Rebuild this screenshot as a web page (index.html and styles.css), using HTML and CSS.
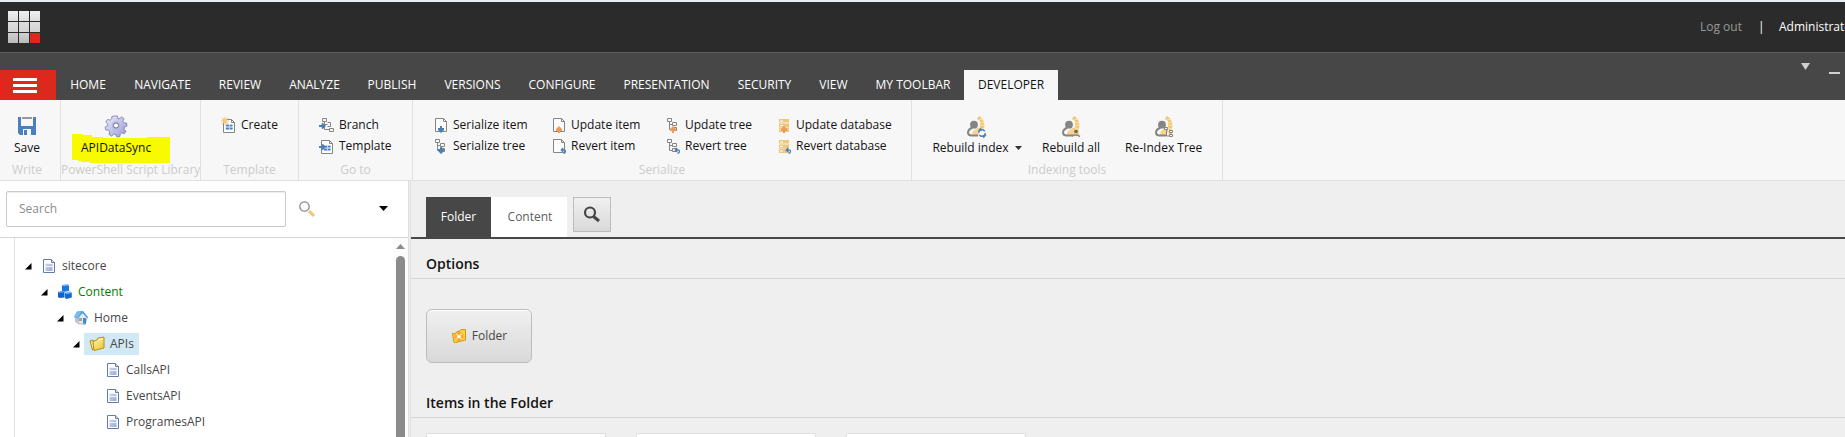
FILE: index.html
```html
<!DOCTYPE html>
<html lang="en">
<head>
<meta charset="utf-8">
<title>Content Editor</title>
<link rel="stylesheet" href="styles.css">
</head>
<body>
<svg class="sprites" width="0" height="0" aria-hidden="true">
  <defs>
    <linearGradient id="gGear" x1="0" y1="0" x2="1" y2="1"><stop offset="0" stop-color="#ececfa"/><stop offset="1" stop-color="#9a9ad0"/></linearGradient>
    <linearGradient id="gFolder" x1="0" y1="0" x2="1" y2="1"><stop offset="0" stop-color="#fff6b0"/><stop offset="1" stop-color="#f0c22c"/></linearGradient>
    <linearGradient id="gDoc" x1="0" y1="0" x2="1" y2="1"><stop offset="0" stop-color="#ccd5ea"/><stop offset="1" stop-color="#9aaad2"/></linearGradient>
    <symbol id="page" viewBox="0 0 14 16"><path d="M1.500 1.500h8l3 3v10h-11z" fill="#fbfbfb" stroke="#858585"/><path d="M9.500 1.500v3h3" fill="none" stroke="#858585"/></symbol>
    <symbol id="tree" viewBox="0 0 14 16"><path d="M1.500 1.500h4v3h-4zM3.500 4.500v8h3M3.500 7.500h3M6.500 5.500h4v3h-4zM6.500 10.500h4v3h-4z" fill="none" stroke="#858585"/></symbol>
    <symbol id="db" viewBox="0 0 14 16"><path d="M2 2h10v3.500H2zM2 6.500h10V10H2zM2 11h10v4H2z" fill="#ecc77d"/><path d="M2 6h10M2 10.500h10" stroke="#f3dcaa"/><path d="M3 4h3M3 8.500h3M3 13h3" stroke="#fff"/></symbol>
    <symbol id="down" viewBox="0 0 14 16"><path d="M6 9h2v2h2v2l-3 3-3-3v-2h2z" fill="#4a7fba"/></symbol>
    <symbol id="up" viewBox="0 0 14 16"><path d="M6 16h2v-2h2v-2L7 9l-3 3v2h2z" fill="#ee9a58"/></symbol>
    <symbol id="undo" viewBox="0 0 14 16"><path d="M9 12h3q1.700 0 1.500 1.500T11.500 15.300M11.200 10l-2 2 2 2" fill="none" stroke="#4a7fba" stroke-width="1.300"/></symbol>
    <symbol id="sheet" viewBox="0 0 14 16"><path d="M2.500 2.500h8l3 3v10h-11z" fill="#fff" stroke="#858585"/><path d="M10.500 2.500v3h3" fill="none" stroke="#858585"/><path d="M4.500 7.500h7v5.500h-7z" fill="#bdd4ee"/><path d="M5 8.500h3M9 8.500h2.500M5 11.500h3M9 11.500h2.500" stroke="#4a7fba" stroke-width="1.600"/></symbol>
    <symbol id="person" viewBox="0 0 22 22"><path d="M12 3l2-3 1.500 1L18 4l1 3 .5 3-1 4 .5 5H7l1-4 7-4 0-6z" fill="#f2c66d"/><path d="M14 4l5-1.500M14.500 7l5-1M14.500 9l5 .5M14 11.500l5 1.500M9 14v5M11 13.500v5M13 13v6M15.500 12.500v6" stroke="#fbebc8" stroke-width=".8"/><circle cx="9" cy="8.700" r="3.900" fill="#858585"/><path d="M7.500 11.500Q3 13.500 3 16.500 3 19.500 6.500 19.500H13" fill="none" stroke="#858585" stroke-width="2"/></symbol>
    <symbol id="doc" viewBox="0 0 14 16"><path d="M1.500 1.500h8l3 3v10h-11z" fill="#fff" stroke="#667aa9"/><path d="M9.500 1.500v3h3" fill="#dfe5f3" stroke="#667aa9"/><path d="M3.500 6h7v7h-7z" fill="url(#gDoc)"/><path d="M3 5.500h5M3 8.500h8" stroke="#eef2fa"/></symbol>
    <symbol id="arrow" viewBox="0 0 7 7"><path d="M0 6.500L6.500 0v6.500z"/></symbol>
  </defs>
</svg>

<header class="topbar">
  <div class="logo"><i></i><i></i><i></i><i></i><i></i><i></i><i></i><i></i><i class="red"></i></div>
  <div class="account"><a class="logout">Log out</a><span class="bar">|</span><span class="user">Administrator</span></div>
</header>

<nav class="tabs">
  <button class="menu" aria-label="Menu"><span></span><span></span><span></span></button>
  <div class="tablist">
    <a>HOME</a><a>NAVIGATE</a><a>REVIEW</a><a>ANALYZE</a><a>PUBLISH</a><a>VERSIONS</a><a>CONFIGURE</a><a>PRESENTATION</a><a>SECURITY</a><a>VIEW</a><a>MY TOOLBAR</a><a class="active">DEVELOPER</a>
  </div>
  <div class="window-tools">
    <svg width="9" height="7"><path d="M0 0h9L4.500 7z" fill="#d0d0d0"/></svg><span class="minimize"></span>
  </div>
</nav>

<section class="ribbon">
  <div class="chunk write">
    <div class="tools"><div class="big save">
      <svg width="18" height="18" viewBox="0 0 18 18"><path d="M0 0h18v18H2l-2-2z" fill="#4a80bb"/><path d="M3 0h12v9H3z" fill="#f7f7f7"/><path d="M4 1h10" stroke="#999" stroke-width="2"/><path d="M5 12h8v6H5z" fill="#f7f7f7"/><path d="M6 13h3v5H6z" fill="#4a80bb"/></svg>
      <span>Save</span></div></div>
    <div class="caption">Write</div>
  </div>
  <div class="chunk script">
    <div class="tools"><div class="big sync">
      <svg class="marker" width="98" height="30" viewBox="0 0 98 30"><path d="M0 0h11v1h9v2h11v1h44V3h23v26H18v-1H9v-1H6v-1H0z" fill="#f8fa00"/></svg>
      <svg class="gear" width="22" height="22" viewBox="0 0 22 22"><path d="M9.500 1h3l.6 3 2-.8L17 1.800l2 2-1.200 2.500 1 1.500 2.800.2.4 3-2.700 1.200-.2 2 1.900 2-1.600 2.400-2.700-.7-1.500 1.200-.3 2.500-3 .3-1.300-2.400-2-.2-2 1.800-2.500-1.600.5-2.700L3.400 15l-2.700 0-.6-2.900 2.500-1.300.1-2L.8 7l1.600-2.500 2.800.6 1.500-1.300L6.800 1.500z" fill="url(#gGear)" stroke="#7777b5" stroke-width=".8"/><circle cx="11" cy="10.500" r="4" fill="#b3b3e0"/><circle cx="11" cy="10.500" r="2.500" fill="#fff" stroke="#7474b2"/></svg>
      <span>APIDataSync</span></div></div>
    <div class="caption">PowerShell Script Library</div>
  </div>
  <div class="chunk template">
    <div class="tools grid"><div class="small"><svg width="14" height="16"><use href="#sheet" width="14" height="16"/><path d="M4 0v8M0 4h8M1 1l6 6M7 1L1 7" stroke="#f1ca80" stroke-width="1.200"/></svg>Create</div></div>
    <div class="caption">Template</div>
  </div>
  <div class="chunk goto">
    <div class="tools grid">
      <div class="small"><svg width="16" height="16"><path d="M3.500 1.500h4v3h-4zM5.500 4.500v8h5M5.500 7.500h3M8.500 5.500h3v4h-3M10.500 11.500h4v3h-4z" fill="none" stroke="#858585"/><path d="M0 9h5M3 6.500L5.500 9 3 11.500" fill="none" stroke="#4a7fba" stroke-width="2"/></svg>Branch</div>
      <div class="small"><svg width="16" height="16"><use href="#sheet" width="14" height="16"/><path d="M0 9h5M3 6.500L5.500 9 3 11.500" fill="none" stroke="#4a7fba" stroke-width="2"/></svg>Template</div>
    </div>
    <div class="caption">Go to</div>
  </div>
  <div class="chunk serialize">
    <div class="tools grid">
      <div class="small"><svg width="14" height="16"><use href="#page"/><use href="#down"/></svg>Serialize item</div>
      <div class="small"><svg width="14" height="16"><use href="#tree"/><use href="#down"/></svg>Serialize tree</div>
      <div class="small"><svg width="14" height="16"><use href="#page"/><use href="#up"/></svg>Update item</div>
      <div class="small"><svg width="14" height="16"><use href="#page"/><use href="#undo"/></svg>Revert item</div>
      <div class="small"><svg width="14" height="16"><use href="#tree"/><use href="#up"/></svg>Update tree</div>
      <div class="small"><svg width="14" height="16"><use href="#tree"/><use href="#undo"/></svg>Revert tree</div>
      <div class="small"><svg width="14" height="16"><use href="#db"/><use href="#up"/></svg>Update database</div>
      <div class="small"><svg width="14" height="16"><use href="#db"/><use href="#undo"/></svg>Revert database</div>
    </div>
    <div class="caption">Serialize</div>
  </div>
  <div class="chunk indexing">
    <div class="tools">
      <div class="big"><svg width="22" height="22"><use href="#person" width="22" height="22"/><circle cx="17" cy="17" r="3.300" fill="#f7f7f7" stroke="#4a7fba" stroke-width="1.500" stroke-dasharray="8 2.360"/><path d="M13 14.500h4l-1-3zM21.500 19h-4l1 3.500z" fill="#4a7fba"/></svg>
        <span class="with-arrow">Rebuild index<svg width="7" height="4"><path d="M0 0h7L3.500 4z" fill="#333"/></svg></span></div>
      <div class="big"><svg width="22" height="22"><use href="#person" width="22" height="22"/><circle cx="16" cy="15.500" r="1.800" fill="#666"/><path d="M12 20q4-2 8 .5" fill="none" stroke="#858585" stroke-width="1.500"/></svg><span>Rebuild all</span></div>
      <div class="big"><svg width="22" height="22"><use href="#person" width="22" height="22"/><path d="M11.500 11.500h3v2h-3zM13.500 14v6h3M16.500 14.500h3v2h-3zM16.500 18.500h3v2h-3z" fill="#f7f7f7" stroke="#858585"/></svg><span>Re-Index Tree</span></div>
    </div>
    <div class="caption">Indexing tools</div>
  </div>
</section>

<main class="workspace">
  <aside class="sidebar">
    <div class="search">
      <div class="search-box">Search</div>
      <svg class="lens" width="16" height="16"><path d="M10 10l5 5" stroke="#efc57c" stroke-width="3"/><circle cx="5.500" cy="5.500" r="4.700" fill="#fdfdfd" stroke="#858585" stroke-width="1.200"/></svg>
      <svg class="caret" width="9" height="5"><path d="M0 0h9L4.500 5z"/></svg>
    </div>
    <div class="tree-area">
      <div class="tree">
        <div class="node l0"><svg class="exp" width="7" height="7"><use href="#arrow"/></svg><span class="label"><svg width="14" height="16"><use href="#doc"/></svg>sitecore</span></div>
        <div class="node l1"><svg class="exp" width="7" height="7"><use href="#arrow"/></svg><span class="label green"><svg width="16" height="16"><path d="M5 1l6-.5 1 1V7L6 8 5 7z" fill="#1978e0"/><path d="M5 1l6-.5 1 1-6 .5z" fill="#7fc0fa"/><path d="M1 8l5-1 1.500 1v5.500L2.500 14 1 13z" fill="#1260ca"/><path d="M1 8l5-1 1.500 1-5 1z" fill="#65aff5"/><path d="M8 9l5-1.500L14.800 9v4.500L9.500 15 8 14z" fill="#1469d5"/><path d="M8 9l5-1.500L14.800 9l-5 1z" fill="#79bdf9"/></svg>Content</span></div>
        <div class="node l2"><svg class="exp" width="7" height="7"><use href="#arrow"/></svg><span class="label"><svg width="16" height="16"><path d="M2 7l3 6.500 7 1L14.500 7 10 3z" fill="#e8eaed" stroke="#9aa0a8" stroke-width=".7"/><path d="M2 8v4l4 2V7z" fill="#bfc4ca"/><path d="M1 7l3-5.500L10 1l5 6-1 1-4.500-5L5 8.500z" fill="#51a2df"/><path d="M1 7l3-5.500L8 2 4.500 8z" fill="#78bdeb"/><path d="M10 8h3v6l-3-.5z" fill="#4088d0"/><path d="M6 8h3v3H6z" fill="#9ba3ab"/></svg>Home</span></div>
        <div class="node l3"><svg class="exp" width="7" height="7"><use href="#arrow"/></svg><span class="label selected"><svg width="16" height="16"><path d="M1 5l3-1 2 9-2.500 1z" fill="#f8e486" stroke="#b38a1e"/><path d="M4 5.500L8 4l1-2 6-1v11L5 14.500z" fill="url(#gFolder)" stroke="#b98c12"/><path d="M9 4l5-1" stroke="#fffbe0" stroke-width="1.500"/></svg>APIs</span></div>
        <div class="node leaf"><span class="label"><svg width="14" height="16"><use href="#doc"/></svg>CallsAPI</span></div>
        <div class="node leaf"><span class="label"><svg width="14" height="16"><use href="#doc"/></svg>EventsAPI</span></div>
        <div class="node leaf"><span class="label"><svg width="14" height="16"><use href="#doc"/></svg>ProgramesAPI</span></div>
      </div>
      <div class="scrollbar"><svg width="9" height="5"><path d="M0 5h9L4.500 0z" fill="#8b8b8b"/></svg><div class="thumb"></div></div>
    </div>
  </aside>
  <div class="splitter"></div>
  <section class="content">
    <div class="editor-tabs">
      <a class="on">Folder</a><a class="off">Content</a>
      <button class="find" aria-label="Search"><svg width="17" height="17"><circle cx="7" cy="6.500" r="5" fill="none" stroke="#444" stroke-width="2.200"/><path d="M10.500 10.500L16 15" stroke="#444" stroke-width="3"/></svg></button>
    </div>
    <h2 class="first">Options</h2>
    <div class="options"><button class="folder"><svg width="16" height="16"><path d="M1.500 5.500h3L5.500 4 9 3l1-1.500h4.500V12L4.500 14.500H3z" fill="#fbd43b" stroke="#c9981a"/><circle cx="8" cy="8.500" r="4.500" fill="#ffa531"/><path d="M5 5.500l6 6M11 5.500l-6 6" stroke="#ffe19a" stroke-width="1.400"/><circle cx="8" cy="8.500" r="1.600" fill="#fff"/></svg>Folder</button></div>
    <h2>Items in the Folder</h2>
    <div class="cards"><div></div><div></div><div></div></div>
  </section>
</main>
</body>
</html>
```
FILE: styles.css
```css
* { box-sizing: border-box; }
html, body { height: 100%; }
body {
  margin: 0;
  height: 437px;
  overflow: hidden;
  display: flex;
  flex-direction: column;
  font: 12px/18px "Open Sans", sans-serif;
  color: #131313;
  background: #efefef;
}
svg { display: block; flex: none; overflow: visible; }
.sprites { position: absolute; }
button { font: inherit; padding: 0; border: 0; }

.topbar {
  flex: none;
  height: 53px;
  display: flex;
  justify-content: space-between;
  background: #2b2b2b;
  border-top: 2px solid #e9edf4;
  border-bottom: 1px solid #5e5e5e;
}
.logo {
  display: grid;
  grid-template-columns: repeat(3, 10px);
  grid-auto-rows: 10px;
  gap: 1px;
  padding: 9px 0 0 8px;
}
.logo i { background: linear-gradient(#efefef, #dedede); }
.logo i:nth-child(n+4) { background: linear-gradient(#dfdfdf, #d2d2d2); }
.logo i:nth-child(n+7) { background: linear-gradient(#cfcfcf, #bbb); }
.logo i.red { background: #dc291e; }
.account {
  width: 145px;
  display: flex;
  padding-top: 16px;
  white-space: nowrap;
  color: #fff;
  overflow: hidden;
}
.account > * { flex: none; }
.logout { width: 58px; color: #999; }
.bar { width: 21px; }

.tabs { flex: none; height: 47px; display: flex; align-items: flex-end; background: #474747; }
.menu {
  width: 56px;
  height: 30px;
  background: #dc291e;
  display: flex;
  flex-direction: column;
  align-items: center;
  justify-content: center;
  gap: 3px;
  padding: 1px 6px 0 0;
}
.menu span { width: 24px; height: 3px; background: #fff; }
.tablist {
  display: grid;
  grid-template-columns: 64px 85px 70px 79px 76px 85px 94px 115px 81px 57px 102px 94px;
  height: 30px;
  line-height: 30px;
  color: #fff;
  text-align: center;
  white-space: nowrap;
}
.tablist .active { background: #f7f7f7; color: #131313; }
.window-tools { align-self: flex-start; margin-left: auto; display: flex; gap: 19px; padding: 10px 5px 0 0; }
.minimize { width: 11px; height: 2px; margin-top: 9px; background: #d0d0d0; }

.ribbon { flex: none; height: 81px; display: flex; background: #f7f7f7; border-bottom: 1px solid #e0e0e0; }
.chunk { display: flex; flex-direction: column; border-right: 1px solid #e0e0e0; white-space: nowrap; }
.tools { height: 61px; display: flex; }
.caption { text-align: center; color: #ccc; line-height: 18px; }
.write { width: 61px; }
.script { width: 140px; }
.template { width: 98px; }
.goto { width: 114px; }
.serialize { width: 499px; }
.indexing { width: 311px; }
.write .caption { padding-right: 6px; }
.big { display: flex; flex-direction: column; align-items: center; gap: 1px; padding-top: 16px; }
.save { padding: 17px 0 0 14px; gap: 4px; }
.sync { position: relative; padding: 15px 0 0 20px; gap: 2px; }
.sync .gear, .sync span { position: relative; }
.sync .marker { position: absolute; left: 11px; top: 34px; }
.grid { display: grid; grid-template-rows: 21px 21px; grid-auto-flow: column; padding-top: 14px; justify-content: start; }
.small { display: flex; align-items: center; gap: 5px; }
.template .grid { padding-left: 20px; }
.template .small { gap: 6px; }
.goto .grid { padding-left: 20px; }
.goto .small { gap: 4px; }
.serialize .grid { grid-template-columns: 118px 114px 111px 1fr; padding-left: 21px; }
.indexing .tools { padding-left: 20px; }
.indexing .big:nth-child(2) { margin: 0 25px 0 20px; }
.with-arrow { display: flex; align-items: center; gap: 6px; }
.indexing .big:first-child { width: 90px; }
.indexing .big:first-child > svg { margin-right: 3px; }

.workspace { flex: 1; min-height: 0; display: flex; }
.sidebar { width: 408px; background: #fff; display: flex; flex-direction: column; overflow: hidden; }
.search { height: 57px; flex: none; display: flex; align-items: flex-start; padding: 10px 0 0 6px; border-bottom: 1px solid #d5d5d5; }
.search-box {
  width: 280px;
  height: 36px;
  border: 1px solid #c9c9c9;
  border-radius: 2px;
  box-shadow: inset 0 1px 1px #eee;
  padding: 0 12px;
  line-height: 34px;
  color: #8b8b8b;
}
.lens { margin: 10px 0 0 13px; }
.caret { margin: 15px 0 0 64px; }
.tree-area { flex: 1; min-height: 0; display: flex; justify-content: space-between; padding-left: 14px; }
.tree { border-left: 1px solid #e3e3e3; padding-top: 15px; width: 340px; overflow: hidden; }
.node { height: 26px; display: flex; align-items: center; color: #474747; }
.l0 { padding-left: 10px; }
.l1 { padding-left: 26px; }
.l2 { padding-left: 42px; }
.l3 { padding-left: 58px; }
.leaf { padding-left: 85px; }
.label { display: flex; align-items: center; gap: 5px; height: 22px; padding: 0 5px; }
.exp + .label { margin-left: 4px; }
.l0 .label, .leaf .label { gap: 6px; padding-left: 6px; }
.green { color: #008000; }
.selected { background: #d1e9f5; }
.scrollbar { width: 15px; background: #fcfcfc; display: flex; flex-direction: column; align-items: center; padding-top: 6px; }
.thumb { flex: 1; width: 9px; margin-top: 7px; border-radius: 5px 5px 0 0; background: #8b8b8b; }
.splitter { width: 3px; background: #efefef; border: 1px solid #dedede; border-width: 0 1px; }

.content { flex: 1; min-width: 0; display: flex; flex-direction: column; background: #efefef; overflow: hidden; }
.content > * { flex: none; }
.editor-tabs { height: 58px; display: flex; align-items: flex-end; padding-left: 15px; border-bottom: 2px solid #474747; }
.editor-tabs a { height: 40px; line-height: 40px; text-align: center; }
.on { width: 65px; background: #474747; color: #fff; }
.off { width: 76px; padding-left: 2px; background: #fff; color: #5e5e5e; }
.find {
  width: 38px;
  height: 35px;
  margin: 0 0 5px 6px;
  padding-right: 2px;
  border: 1px solid #bdbdbd;
  background: linear-gradient(#f0f0f0, #d9d9d9);
  display: flex;
  align-items: center;
  justify-content: center;
}
h2 { margin: 0; height: 40px; padding: 15px 0 0 15px; font-size: 14px; line-height: 20px; font-weight: 600; border-bottom: 1px solid #d4d4d4; }
.options { height: 99px; padding: 30px 0 0 15px; }
.folder {
  width: 106px;
  height: 54px;
  border: 1px solid #bdbdbd;
  border-radius: 6px;
  background: linear-gradient(#f0f0f0, #d9d9d9);
  box-shadow: inset 0 1px #fff;
  display: flex;
  align-items: center;
  justify-content: center;
  gap: 5px;
  color: #474747;
}
.content .cards { flex: 1; min-height: 0; display: flex; gap: 30px; padding: 15px 0 0 15px; }
.cards div { width: 180px; background: #fff; border: 1px solid #dedede; border-bottom: 0; border-radius: 2px 2px 0 0; }
```
